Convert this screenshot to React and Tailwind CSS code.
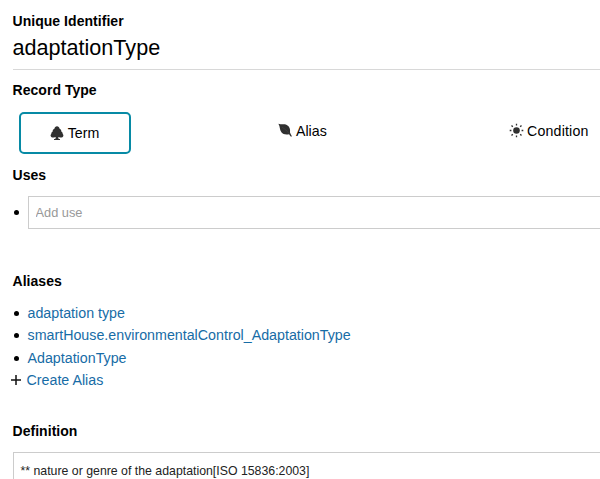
function TreeIcon() {
  return (
    <svg className="h-[15px] w-[14px] shrink-0 fill-[#303030]" viewBox="0 0 14 15">
      <path d="M7 .300C8.300.500 9.400 1.500 9.600 2.800c1.200.5 1.800 1.500 1.700 2.700 1 .6 1.500 1.500 1.400 2.400.7.500.8 1.300.6 2-.4 1.300-1.800 1.700-3.100 1.500-.8-.1-1.500-.2-2.100-.2.100.9.400 1.500.9 1.900h1v.9H4v-.9h1c.5-.4.8-1 .9-1.900-.6 0-1.300.1-2.100.2-1.300.2-2.700-.2-3.100-1.500-.2-.7-.1-1.500.6-2-.1-.9.400-1.800 1.400-2.400-.1-1.200.5-2.200 1.700-2.700C4.600 1.500 5.700.5 7 .300z" />
    </svg>
  );
}

function LeafIcon() {
  return (
    <svg className="h-[15px] w-[15px] shrink-0 fill-[#303030]" viewBox="0 0 15 15">
      <path d="M.4.800C3.500 1.900 6 .700 8.800 2c2.800 1.300 3.600 4 3.200 7.500.5 1.100 1 2.300 1.900 3.700l-.9.500c-.9-1-1.400-1.700-1.900-2.500-3.100.7-6.100.2-7.700-1.900C1.400 6.700 2.300 3.900.4.800z" />
      <path d="M4 4.200c2.800 1.600 5.300 3.800 7 6.400" fill="none" stroke="#505050" strokeWidth=".4" />
    </svg>
  );
}

function SunIcon() {
  return (
    <svg className="h-[15px] w-[15px] shrink-0" viewBox="0 0 15 15">
      <circle cx="7.500" cy="7.500" r="3.300" fill="#303030" />
      <path
        d="M7.500.700v1.700M7.500 12.600v1.700M.700 7.500h1.700M12.600 7.500h1.700M2.500 2.500l1.300 1.300M11.200 11.200l1.300 1.300M2.500 12.500l1.300-1.300M11.200 3.800l1.300-1.300"
        stroke="#303030"
        strokeWidth="1.300"
      />
    </svg>
  );
}

function Heading({ children }) {
  return <h2 className="text-sm leading-5 font-bold tracking-[0.040px]">{children}</h2>;
}

function Bullet() {
  return <span className="mr-[9px] ml-[1px] size-[5px] shrink-0 rounded-full bg-black" />;
}

const aliases = ["adaptation type", "smartHouse.environmentalControl_AdaptationType", "AdaptationType"];

export default function App() {
  return (
    <main className="h-[479px] w-[600px] overflow-hidden bg-white pt-[11px] pl-[12.500px] font-['Liberation_Sans',sans-serif] text-black">
      <section className="h-[59px] border-b border-[#d8d8d8]">
        <Heading>Unique Identifier</Heading>
        <p className="mt-[3px] text-[21.600px] leading-7">adaptationType</p>
      </section>

      <section className="h-[84px] pt-[10px]">
        <Heading>Record Type</Heading>
        <div className="mt-[12px] flex h-[42px] pl-[6.500px] text-[14.200px]">
          <div className="flex w-[112px] items-center justify-center gap-[4px] rounded-[5px] border-2 border-[#078aa5] pr-px">
            <TreeIcon />
            <span className="pt-px">Term</span>
          </div>
          <div className="ml-[147px] flex h-[37px] items-center gap-[3px]">
            <LeafIcon />
            <span className="pt-[3px]">Alias</span>
          </div>
          <div className="ml-auto flex h-[37px] items-center gap-[3.500px] pr-[11.500px]">
            <SunIcon />
            <span className="pt-[3px] tracking-[0.160px]">Condition</span>
          </div>
        </div>
      </section>

      <section className="h-[117px] pt-[11px]">
        <Heading>Uses</Heading>
        <div className="mt-[11px] flex items-center">
          <Bullet />
          <input
            className="h-[33px] min-w-0 flex-1 border border-r-0 border-[#ccc] px-[7px] text-[12.800px] outline-none placeholder:text-[#999]"
            placeholder="Add use"
          />
        </div>
      </section>

      <section className="h-[149.500px]">
        <Heading>Aliases</Heading>
        <ul className="mt-[11px] text-[14.250px] leading-[22.400px] text-[#176ca6]">
          {aliases.map((alias) => (
            <li key={alias} className="flex items-center">
              <Bullet />
              <a>{alias}</a>
            </li>
          ))}
          <li className="-ml-[2px] flex items-center">
            <svg className="mr-[6px] h-[10px] w-[10px]" viewBox="0 0 10 10">
              <path d="M5 0v10M0 5h10" stroke="#111" strokeWidth="1.500" />
            </svg>
            <a>Create Alias</a>
          </li>
        </ul>
      </section>

      <section>
        <Heading>Definition</Heading>
        <div className="mt-[11px] h-[80px] border border-r-0 border-[#ccc] px-[7px] pt-[10px] text-[12.320px] leading-4 text-[#222]">
          ** nature or genre of the adaptation[ISO 15836:2003]
        </div>
      </section>
    </main>
  );
}
